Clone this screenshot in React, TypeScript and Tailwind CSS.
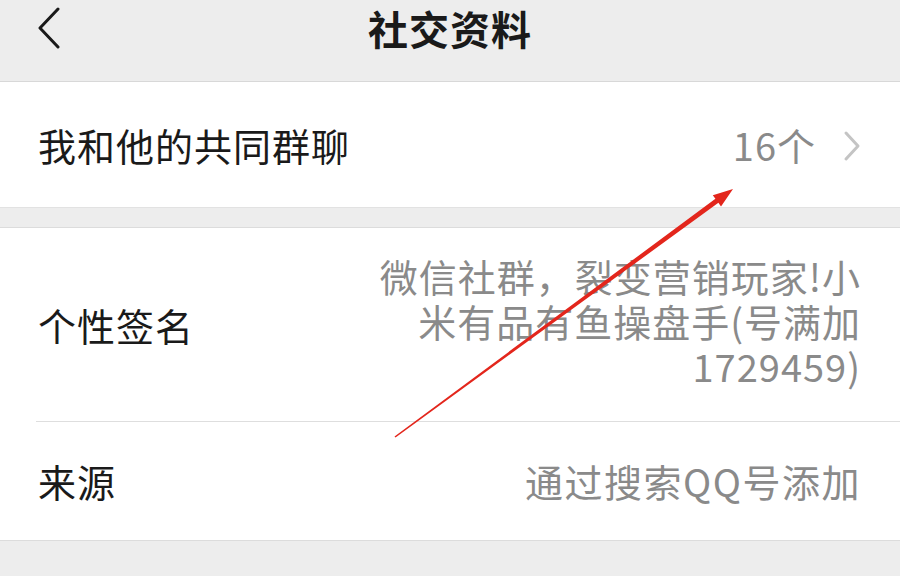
const FONT = { fontFamily: '"Noto Sans CJK SC", "Noto Sans", sans-serif' };

function BackIcon() {
  return (
    <svg width="30" height="44" viewBox="0 0 30 44" className="text-[#1a1a1a]">
      <path d="M21 4 L3 23 L21 42" fill="none" stroke="currentColor" strokeWidth="3" strokeLinecap="round" strokeLinejoin="round" />
    </svg>
  );
}

function Chevron() {
  return (
    <svg width="20" height="32" viewBox="0 0 20 32" className="text-[#c4c4c4]">
      <path d="M4 3 L16 16 L4 29" fill="none" stroke="currentColor" strokeWidth="3" strokeLinecap="round" strokeLinejoin="round" />
    </svg>
  );
}

function Row({ label, children, className = "" }: { label: string; children: React.ReactNode; className?: string }) {
  return (
    <div className={`flex items-center justify-between pl-[38px] pr-[40px] ${className}`}>
      <div className="text-[38px] leading-none tracking-[1px] text-[#1a1a1a]">{label}</div>
      {children}
    </div>
  );
}

export default function App() {
  return (
    <div className="relative flex h-[576px] w-[900px] flex-col overflow-hidden bg-[#ededed]" style={FONT}>
      <div className="relative flex h-[82px] shrink-0 justify-center border-b border-[#d8d8d8] bg-[#ededed] pt-[5px]">
        <div className="absolute left-[37px] top-[5px]">
          <BackIcon />
        </div>
        <div className="text-[40px] font-bold leading-[46px] tracking-[1px] text-[#1a1a1a]">社交资料</div>
      </div>

      <Row label="我和他的共同群聊" className="h-[126px] shrink-0 border-b border-[#e2e2e2] bg-white">
        <div className="flex items-center gap-[26px]">
          <span className="text-[38px] leading-none tracking-[1px] text-[#8a8a8a]">16个</span>
          <div className="-mr-[2px] mt-[2px]">
            <Chevron />
          </div>
        </div>
      </Row>

      <div className="h-[19px] shrink-0" />

      <div className="flex shrink-0 flex-col border-y border-[#dcdcdc] bg-white">
        <Row label="个性签名" className="h-[193px]">
          <div className="-mr-[1px] mb-[8px] text-right text-[38px] leading-[45px] tracking-[1px] text-[#8a8a8a]">
            <div>微信社群，裂变营销玩家!小</div>
            <div>米有品有鱼操盘手(号满加</div>
            <div>1729459)</div>
          </div>
        </Row>
        <div className="ml-[36px] h-px bg-[#dedede]" />
        <Row label="来源" className="h-[118px]">
          <div className="-mr-[1px] text-[38px] leading-none tracking-[1.5px] text-[#8a8a8a]">通过搜索QQ号添加</div>
        </Row>
      </div>

      <svg className="pointer-events-none absolute left-0 top-0" width="900" height="576" viewBox="0 0 900 576">
        <polygon
          points="395.5,437.6 718.4,202.8 721.0,206.4 733,189 712.8,195.2 715.4,198.8 394.5,436.4"
          fill="#e3261c"
        />
      </svg>
    </div>
  );
}
